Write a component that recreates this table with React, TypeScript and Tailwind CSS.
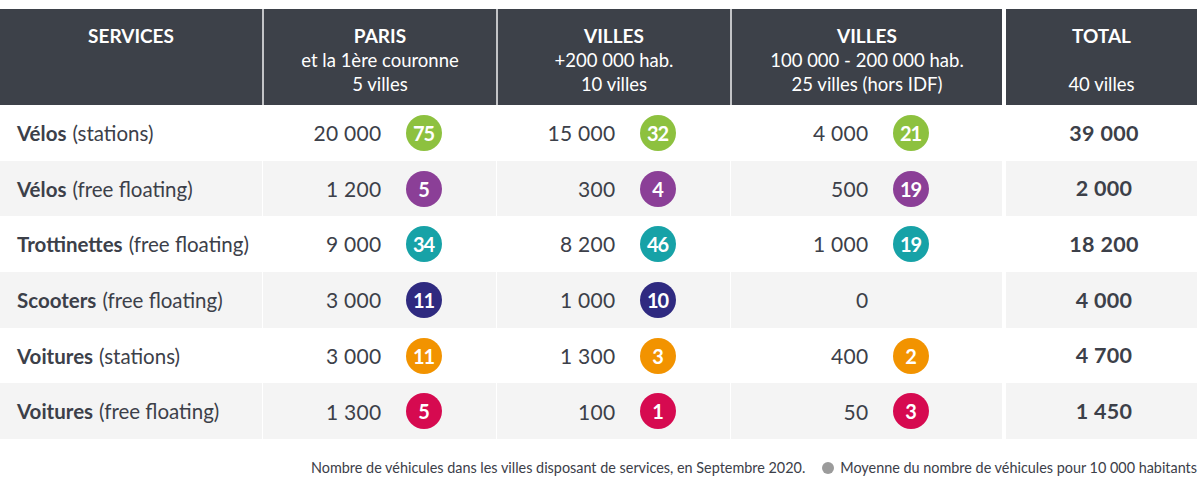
import React from "react";

type Cell = { n: string; c?: string };
type Row = { b: string; r: string; cells: Cell[]; total: string; bg: string; color: string };

const GREEN = "bg-[#8dc13f]";
const PURPLE = "bg-[#8b3f97]";
const TEAL = "bg-[#17a2a7]";
const NAVY = "bg-[#2f2a80]";
const ORANGE = "bg-[#f29300]";
const RED = "bg-[#d60a50]";

const rows: Row[] = [
  { b: "Vélos", r: "(stations)", cells: [{ n: "20 000", c: "75" }, { n: "15 000", c: "32" }, { n: "4 000", c: "21" }], total: "39 000", bg: "bg-white", color: GREEN },
  { b: "Vélos", r: "(free floating)", cells: [{ n: "1 200", c: "5" }, { n: "300", c: "4" }, { n: "500", c: "19" }], total: "2 000", bg: "bg-[#f4f4f4]", color: PURPLE },
  { b: "Trottinettes", r: "(free floating)", cells: [{ n: "9 000", c: "34" }, { n: "8 200", c: "46" }, { n: "1 000", c: "19" }], total: "18 200", bg: "bg-white", color: TEAL },
  { b: "Scooters", r: "(free floating)", cells: [{ n: "3 000", c: "11" }, { n: "1 000", c: "10" }, { n: "0" }], total: "4 000", bg: "bg-[#f4f4f4]", color: NAVY },
  { b: "Voitures", r: "(stations)", cells: [{ n: "3 000", c: "11" }, { n: "1 300", c: "3" }, { n: "400", c: "2" }], total: "4 700", bg: "bg-white", color: ORANGE },
  { b: "Voitures", r: "(free floating)", cells: [{ n: "1 300", c: "5" }, { n: "100", c: "1" }, { n: "50", c: "3" }], total: "1 450", bg: "bg-[#f4f4f4]", color: RED },
];

const font = { fontFamily: "Lato, 'Open Sans', sans-serif" };

function HeadCell({ lines, className }: { lines: string[]; className?: string }) {
  return (
    <div className={`bg-[#3d4149] text-white text-center pt-[15px] leading-[24px] text-[18.5px] ${className ?? ""}`}>
      {lines.map((l, i) =>
        i === 0 ? (
          <div key={i} className="font-bold text-[19px]">{l}</div>
        ) : (
          <div key={i} className="min-h-[24px]">{l}</div>
        )
      )}
    </div>
  );
}

export default function App() {
  return (
    <div className="w-[1200px] h-[498px] bg-white text-[#3c4049] pt-[9px]" style={font}>
      <div className="grid grid-cols-[262px_234px_234px_272px_4px_191px] w-[1197px]">
        <HeadCell lines={["SERVICES"]} className="h-[96px]" />
        <HeadCell lines={["PARIS", "et la 1ère couronne", "5 villes"]} className="border-l-2 border-[#c3c4c7]" />
        <HeadCell lines={["VILLES", "+200 000 hab.", "10 villes"]} className="border-l-2 border-[#c3c4c7]" />
        <HeadCell lines={["VILLES", "100 000 - 200 000 hab.", "25 villes (hors IDF)"]} className="border-l-2 border-[#c3c4c7]" />
        <div className="bg-white" />
        <HeadCell lines={["TOTAL", "", "40 villes"]} />

        {rows.map((row, ri) => (
          <React.Fragment key={ri}>
            <div className={`${row.bg} h-[55.7px] flex items-center pl-[17px] pt-[1px] text-[20.5px]`}>
              <span className="font-bold">{row.b}</span>
              <span className="ml-[6px]">{row.r}</span>
            </div>
            {row.cells.map((cell, ci) => (
              <div key={ci} className={`${row.bg} border-l border-white grid grid-cols-2 items-center text-[21px] tracking-[0.3px]`}>
                <div className="text-right mr-[-2px]">{cell.n}</div>
                <div className="pl-[26px]">
                  {cell.c && (
                    <div className={`${row.color} w-[36px] h-[36px] rounded-full flex items-center justify-center text-white font-bold text-[20px] tracking-[-1px]`}>
                      {cell.c}
                    </div>
                  )}
                </div>
              </div>
            ))}
            <div className="bg-white" />
            <div className={`${row.bg} flex items-center justify-center pl-[5px] font-bold text-[21.5px] tracking-[0.3px]`}>{row.total}</div>
          </React.Fragment>
        ))}
      </div>
      <div className="w-[1197px] flex justify-end items-center mt-[18px] text-[14.4px] text-[#3c4049]">
        <span>Nombre de véhicules dans les villes disposant de services, en Septembre 2020.</span>
        <span className="ml-[17px] mr-[6px] w-[12px] h-[12px] rounded-full bg-[#9b9b9b] inline-block" />
        <span>Moyenne du nombre de véhicules pour 10 000 habitants</span>
      </div>
    </div>
  );
}
